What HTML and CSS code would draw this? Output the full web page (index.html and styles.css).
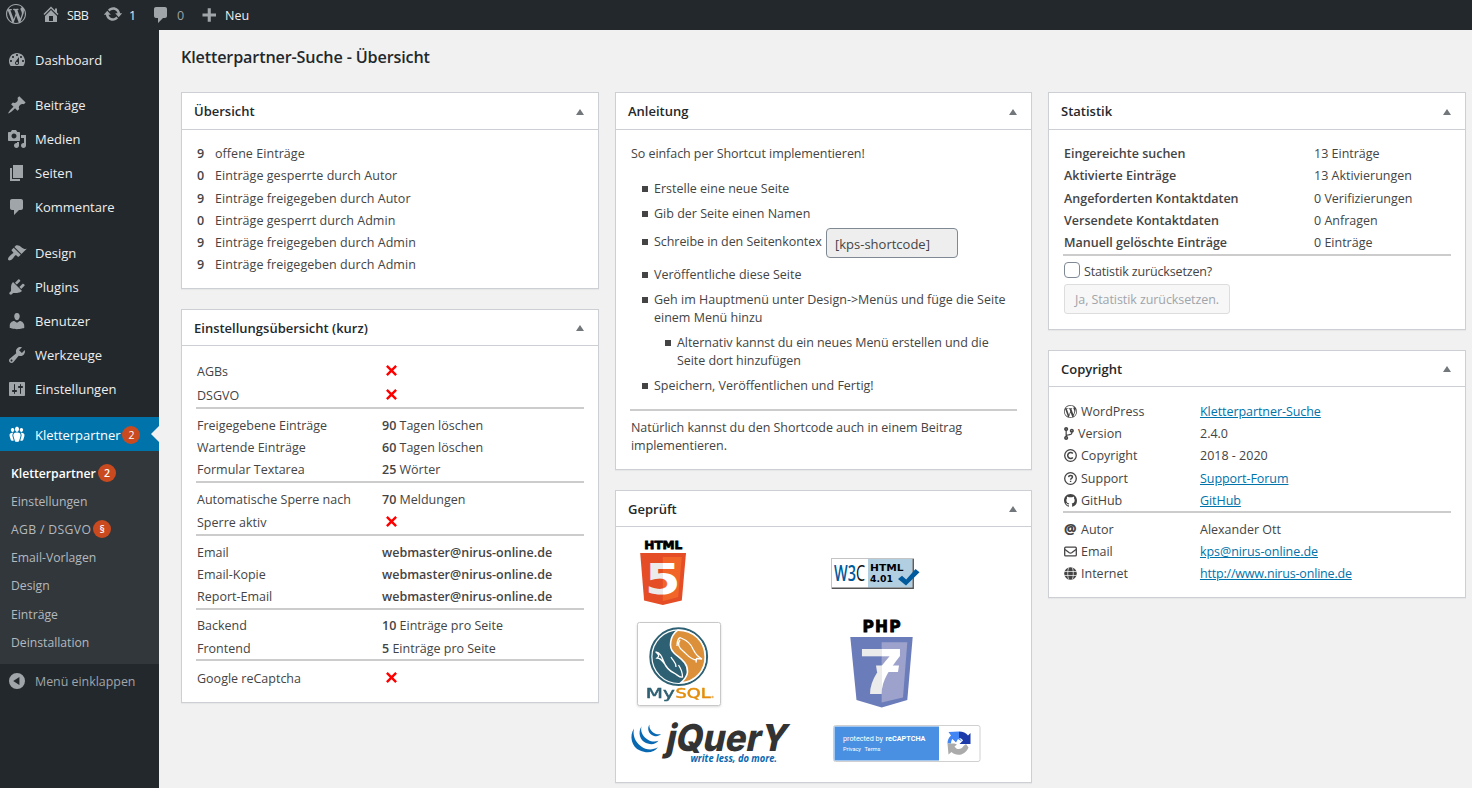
FILE: index.html
```html
<!DOCTYPE html>
<html lang="de">
<head>
<meta charset="utf-8">
<title>Kletterpartner-Suche - Übersicht</title>
<link rel="stylesheet" href="styles.css">
</head>
<body>
<svg class="sprite" aria-hidden="true">
  <symbol id="wordpress" viewBox="0 0 20 20"><path d="M20 10c0-5.51-4.49-10-10-10C4.48 0 0 4.49 0 10c0 5.52 4.48 10 10 10 5.51 0 10-4.48 10-10zM7.78 15.37L4.37 6.22c.55-.02 1.17-.08 1.17-.08.5-.06.44-1.13-.06-1.11 0 0-1.45.11-2.37.11-.18 0-.37 0-.58-.01C4.12 2.69 6.87 1.11 10 1.11c2.33 0 4.45.87 6.05 2.34-.68-.11-1.65.39-1.65 1.58 0 .74.45 1.36.9 2.1.35.61.55 1.36.55 2.46 0 1.49-1.4 5-1.4 5l-3.03-8.37c.54-.02.82-.17.82-.17.5-.05.44-1.25-.06-1.22 0 0-1.44.12-2.38.12-.87 0-2.33-.12-2.33-.12-.5-.03-.56 1.2-.06 1.22l.92.08 1.26 3.41zM17.41 10c.24-.64.74-1.87.43-4.25.7 1.29 1.05 2.71 1.05 4.25 0 3.29-1.73 6.24-4.4 7.78.97-2.59 1.94-5.2 2.92-7.78zM6.1 18.09C3.12 16.65 1.11 13.53 1.11 10c0-1.3.23-2.48.72-3.59C3.25 10.3 4.67 14.2 6.1 18.09zm4.03-6.63l2.58 6.98c-.86.29-1.76.45-2.71.45-.79 0-1.57-.11-2.29-.33.81-2.38 1.62-4.74 2.42-7.1z"/></symbol>
  <symbol id="comments" viewBox="0 0 20 20"><path d="M5 2h9c1.1 0 2 .9 2 2v7c0 1.1-.9 2-2 2h-2l-5 5v-5H5c-1.1 0-2-.9-2-2V4c0-1.1.9-2 2-2z"/></symbol>
  <symbol id="toggle" viewBox="0 0 8 6"><path d="M4 0l4 6H0z"/></symbol>
  <symbol id="cross" viewBox="0 0 10 10"><path d="M.8 .8l8.4 8.4M9.2 .8l-8.4 8.4" fill="none" stroke="#f00" stroke-width="2.2"/></symbol>
</svg>

<header class="adminbar">
  <svg class="ic wp"><use href="#wordpress"/></svg>
  <svg class="ic home" viewBox="0 0 20 20"><path d="M16 8.5l1.53 1.53-1.06 1.06L10 4.6l-6.47 6.49-1.06-1.06L10 2.5l4 4v-2h2v4zm-6-2.46l6 5.99V18H4v-5.97zM12 17v-5H8v5h4z"/></svg>
  <span class="bar-site">SBB</span>
  <svg class="ic upd" viewBox="0 0 20 20"><path d="M10.2 3.28c3.53 0 6.43 2.61 6.92 6h2.08l-3.5 4-3.5-4h2.32c-.45-1.97-2.21-3.45-4.32-3.45-1.45 0-2.73.71-3.54 1.78L4.95 5.66C6.23 4.2 8.11 3.28 10.2 3.28zm-.4 13.44c-3.52 0-6.43-2.61-6.92-6H.8l3.5-4c1.17 1.33 2.33 2.67 3.5 4H5.48c.45 1.97 2.21 3.45 4.32 3.45 1.45 0 2.73-.71 3.54-1.78l1.71 1.95c-1.28 1.46-3.15 2.38-5.25 2.38z"/></svg>
  <span class="bar-upd">1</span>
  <svg class="ic com"><use href="#comments"/></svg>
  <span class="bar-com">0</span>
  <svg class="ic plus" viewBox="0 0 20 20"><path d="M17 8.5v3h-5.2v5.2h-3.1v-5.2H3.5v-3h5.2V3.3h3.1v5.2z"/></svg>
  <span class="bar-new">Neu</span>
</header>

<div class="shell">
<nav class="menu">
  <a class="item gap-top"><svg class="ic" viewBox="0 0 20 20"><path d="M3.76 16h12.48c1.1-1.37 1.76-3.11 1.76-5 0-4.42-3.58-8-8-8s-8 3.58-8 8c0 1.89.66 3.63 1.76 5zM10 4c.55 0 1 .45 1 1s-.45 1-1 1-1-.45-1-1 .45-1 1-1zM6 6c.55 0 1 .45 1 1s-.45 1-1 1-1-.45-1-1 .45-1 1-1zm8 0c.55 0 1 .45 1 1s-.45 1-1 1-1-.45-1-1 .45-1 1-1zm-5.37 5.55L12 7v6c0 1.1-.9 2-2 2s-2-.9-2-2c0-.57.24-1.08.63-1.45zM4 10c.55 0 1 .45 1 1s-.45 1-1 1-1-.45-1-1 .45-1 1-1zm12 0c.55 0 1 .45 1 1s-.45 1-1 1-1-.45-1-1 .45-1 1-1zm-5 3c0-.55-.45-1-1-1s-1 .45-1 1 .45 1 1 1 1-.45 1-1z"/></svg><span>Dashboard</span></a>
  <a class="item sep"><svg class="ic" viewBox="0 0 20 20"><path d="M10.44 3.02l1.82-1.82 6.36 6.35-1.83 1.82c-1.05-.68-2.48-.57-3.41.36l-.75.75c-.92.93-1.04 2.35-.35 3.41l-1.83 1.82-2.41-2.41-2.8 2.79c-.42.42-3.38 2.71-3.8 2.29s1.86-3.39 2.28-3.81l2.79-2.79L4.1 9.36l1.83-1.82c1.05.69 2.48.57 3.4-.36l.75-.75c.93-.92 1.05-2.35.36-3.41z"/></svg><span>Beiträge</span></a>
  <a class="item"><svg class="ic" viewBox="0 0 20 20"><path d="M13 11V4c0-.55-.45-1-1-1h-1.67L9 1H5L3.67 3H2c-.55 0-1 .45-1 1v7c0 .55.45 1 1 1h10c.55 0 1-.45 1-1zM7 4.5c1.38 0 2.5 1.12 2.5 2.5S8.38 9.5 7 9.5 4.5 8.38 4.5 7 5.62 4.5 7 4.5zM14 6h5v10.5c0 1.38-1.12 2.5-2.5 2.5S14 17.88 14 16.5s1.12-2.5 2.5-2.5c.17 0 .34.02.5.05V9h-3V6zm-4 8.05V13h2v3.5c0 1.38-1.12 2.5-2.5 2.5S7 17.88 7 16.5 8.12 14 9.5 14c.17 0 .34.02.5.05z"/></svg><span>Medien</span></a>
  <a class="item"><svg class="ic" viewBox="0 0 20 20"><path d="M6 15V2h10v13H6zm-1 1h8v2H3V5h2v11z"/></svg><span>Seiten</span></a>
  <a class="item"><svg class="ic"><use href="#comments"/></svg><span>Kommentare</span></a>
  <a class="item sep2"><svg class="ic" viewBox="0 0 20 20"><path d="M14.48 11.06L7.41 3.99l1.5-1.5c.5-.56 2.3-.47 3.51.32 1.21.8 1.43 1.28 2.91 2.1 1.18.64 2.45 1.26 4.45.85zm-.71.71L6.7 4.7 4.93 6.47c-.39.39-.39 1.02 0 1.41l1.06 1.06c.39.39.39 1.03 0 1.42-.6.6-1.43 1.11-2.21 1.69-.35.26-.7.53-1.01.84C1.43 14.23.4 16.08 1.4 17.07c.99 1 2.84-.03 4.18-1.36.31-.31.58-.66.85-1.02.57-.78 1.08-1.61 1.69-2.21.39-.39 1.02-.39 1.41 0l1.06 1.06c.39.39 1.02.39 1.41 0z"/></svg><span>Design</span></a>
  <a class="item"><svg class="ic" viewBox="0 0 20 20"><path d="M13.11 4.36L9.87 7.6 8 5.73l3.24-3.24c.35-.34 1.05-.2 1.56.32.52.51.66 1.21.31 1.55zm-8 1.77l.91-1.12 9.01 9.01-1.19.84c-.71.71-2.63 1.16-3.82 1.16H6.14L4.9 17.26c-.59.59-1.54.59-2.12 0-.59-.58-.59-1.53 0-2.12l1.24-1.24v-3.88c0-1.13.4-3.19 1.09-3.89zm7.26 3.97l3.24-3.24c.34-.35 1.04-.21 1.55.31.52.51.66 1.21.31 1.55l-3.24 3.25z"/></svg><span>Plugins</span></a>
  <a class="item"><svg class="ic" viewBox="0 0 20 20"><path d="M10 9.25c-2.27 0-2.73-3.44-2.73-3.44C7 4.02 7.82 2 9.97 2c2.16 0 2.98 2.02 2.71 3.81 0 0-.41 3.44-2.68 3.44zm0 2.57L12.72 10c2.39 0 4.52 2.33 4.52 4.53v2.49s-3.65 1.13-7.24 1.13c-3.65 0-7.24-1.13-7.24-1.13v-2.49c0-2.25 1.94-4.48 4.47-4.48z"/></svg><span>Benutzer</span></a>
  <a class="item"><svg class="ic" viewBox="0 0 20 20"><path d="M16.68 9.77c-1.34 1.34-3.3 1.67-4.95.99l-5.41 6.52c-.99.99-2.59.99-3.58 0s-.99-2.59 0-3.57l6.52-5.42c-.68-1.65-.35-3.61.99-4.95 1.28-1.28 3.12-1.62 4.72-1.06l-2.89 2.89 2.82 2.82 2.86-2.87c.53 1.58.18 3.39-1.08 4.65zM3.81 16.21c.4.39 1.04.39 1.43 0 .4-.4.4-1.04 0-1.43-.39-.4-1.03-.4-1.43 0-.39.39-.39 1.03 0 1.43z"/></svg><span>Werkzeuge</span></a>
  <a class="item"><svg class="ic" viewBox="0 0 20 20"><path d="M18 16V4c0-.55-.45-1-1-1H3c-.55 0-1 .45-1 1v12c0 .55.45 1 1 1h14c.55 0 1-.45 1-1zM8 11h1c.55 0 1 .45 1 1s-.45 1-1 1H8v1.5c0 .28-.22.5-.5.5s-.5-.22-.5-.5V13H6c-.55 0-1-.45-1-1s.45-1 1-1h1V5.5c0-.28.22-.5.5-.5s.5.22.5.5V11zm5-2h-1c-.55 0-1-.45-1-1s.45-1 1-1h1V5.5c0-.28.22-.5.5-.5s.5.22.5.5V7h1c.55 0 1 .45 1 1s-.45 1-1 1h-1v5.5c0 .28-.22.5-.5.5s-.5-.22-.5-.5V9z"/></svg><span>Einstellungen</span></a>
  <a class="item active"><svg class="ic" viewBox="0 0 20 20"><path d="M8.03 4.46c-.29 1.28.55 3.46 1.97 3.46 1.41 0 2.25-2.18 1.96-3.46-.22-.98-1.08-1.63-1.96-1.63-.89 0-1.74.65-1.97 1.63zm-4.13.9c-.25 1.08.47 2.93 1.67 2.93s1.92-1.85 1.67-2.93c-.19-.83-.92-1.39-1.67-1.39s-1.48.56-1.67 1.39zm8.86 0c-.25 1.08.47 2.93 1.66 2.93 1.2 0 1.92-1.85 1.67-2.93-.19-.83-.92-1.39-1.67-1.39-.74 0-1.47.56-1.66 1.39zm-.59 11.43l1.25-4.3C14.2 10 12.71 8.47 10 8.47c-2.72 0-4.21 1.53-3.44 4.02l1.26 4.3C8.05 17.51 9 18 10 18c.98 0 1.94-.49 2.17-1.21zm-6.1-7.63c-.49.67-.96 1.83-.42 3.59l1.12 3.79c-.34.2-.77.31-1.2.31-.85 0-1.65-.41-1.85-1.03l-1.07-3.65c-.65-2.11.61-3.4 2.92-3.4.27 0 .54.02.79.06-.1.1-.2.22-.29.33zm8.35-.39c2.31 0 3.58 1.29 2.92 3.4l-1.07 3.65c-.2.62-1 1.03-1.85 1.03-.43 0-.86-.11-1.2-.31l1.11-3.77c.55-1.78.08-2.94-.42-3.61-.08-.11-.18-.23-.28-.33.25-.04.51-.06.79-.06z"/></svg><span>Kletterpartner</span><b class="badge">2</b></a>
  <div class="submenu">
    <a class="current"><span>Kletterpartner</span><b class="badge">2</b></a>
    <a>Einstellungen</a>
    <a><span class="agb">AGB / DSGVO</span><b class="badge">§</b></a>
    <a>Email-Vorlagen</a>
    <a>Design</a>
    <a>Einträge</a>
    <a>Deinstallation</a>
  </div>
  <a class="item collapse"><svg class="ic" viewBox="0 0 20 20"><path fill-rule="evenodd" d="M10 2a8 8 0 1 0 0 16 8 8 0 0 0 0-16zm2.4 3.9v8.2L6.2 10z"/></svg><span>Menü einklappen</span></a>
</nav>

<main class="content">
  <h1>Kletterpartner-Suche - Übersicht</h1>
  <div class="columns">
    <div class="column">
      <section class="panel overview">
        <h2><span>Übersicht</span><svg class="tog"><use href="#toggle"/></svg></h2>
        <div class="rows counts">
          <p><b>9</b><span>offene Einträge</span></p>
          <p><b>0</b><span>Einträge gesperrte durch Autor</span></p>
          <p><b>9</b><span>Einträge freigegeben durch Autor</span></p>
          <p><b>0</b><span>Einträge gesperrt durch Admin</span></p>
          <p><b>9</b><span>Einträge freigegeben durch Admin</span></p>
          <p><b>9</b><span>Einträge freigegeben durch Admin</span></p>
        </div>
      </section>
      <section class="panel settings">
        <h2><span>Einstellungsübersicht (kurz)</span><svg class="tog"><use href="#toggle"/></svg></h2>
        <div class="rows pairs">
          <div class="group first">
            <p class="tall"><span>AGBs</span><svg class="no"><use href="#cross"/></svg></p>
            <p class="tall"><span>DSGVO</span><svg class="no"><use href="#cross"/></svg></p>
          </div>
          <div class="group">
            <p><span>Freigegebene Einträge</span><span><b>90</b> Tagen löschen</span></p>
            <p><span>Wartende Einträge</span><span><b>60</b> Tagen löschen</span></p>
            <p><span>Formular Textarea</span><span><b>25</b> Wörter</span></p>
          </div>
          <div class="group">
            <p><span>Automatische Sperre nach</span><span><b>70</b> Meldungen</span></p>
            <p class="mid"><span>Sperre aktiv</span><svg class="no"><use href="#cross"/></svg></p>
          </div>
          <div class="group">
            <p><span>Email</span><b>webmaster@nirus-online.de</b></p>
            <p><span>Email-Kopie</span><b>webmaster@nirus-online.de</b></p>
            <p><span>Report-Email</span><b>webmaster@nirus-online.de</b></p>
          </div>
          <div class="group close">
            <p><span>Backend</span><span><b>10</b> Einträge pro Seite</span></p>
            <p class="low"><span>Frontend</span><span><b>5</b> Einträge pro Seite</span></p>
          </div>
          <div class="group last">
            <p class="tall"><span>Google reCaptcha</span><svg class="no"><use href="#cross"/></svg></p>
          </div>
        </div>
      </section>
    </div>

    <div class="column second">
      <section class="panel guide">
        <h2><span>Anleitung</span><svg class="tog"><use href="#toggle"/></svg></h2>
        <div class="guide-body">
          <p class="intro">So einfach per Shortcut implementieren!</p>
          <ul>
            <li>Erstelle eine neue Seite</li>
            <li>Gib der Seite einen Namen</li>
            <li class="code-line"><span>Schreibe in den Seitenkontex</span><span class="code">[kps-shortcode]</span></li>
            <li>Veröffentliche diese Seite</li>
            <li>Geh im Hauptmenü unter Design-&gt;Menüs und füge die Seite<br>einem Menü hinzu
              <ul><li>Alternativ kannst du ein neues Menü erstellen und die<br>Seite dort hinzufügen</li></ul>
            </li>
            <li>Speichern, Veröffentlichen und Fertig!</li>
          </ul>
          <p class="note">Natürlich kannst du den Shortcode auch in einem Beitrag<br>implementieren.</p>
        </div>
      </section>
      <section class="panel tested">
        <h2><span>Geprüft</span><svg class="tog"><use href="#toggle"/></svg></h2>
        <div class="logos">
          <svg class="html5" width="47" height="66" viewBox="0 0 47 66">
            <defs><linearGradient id="five" gradientUnits="userSpaceOnUse" x1="0" x2="46" y1="0" y2="0"><stop offset=".495" stop-color="#ebebeb"/><stop offset=".495" stop-color="#fff"/></linearGradient></defs>
            <text x="4.3" y="9.2" font-family="DejaVu Sans" font-weight="700" font-size="11.2" stroke="#000" stroke-width=".8" textLength="38" lengthAdjust="spacingAndGlyphs">HTML</text>
            <path fill="#e44d26" d="M.2 13H46l-4.2 47.4L22.8 65 4.1 60.4z"/>
            <path fill="#f16529" d="M22.8 16.9h19l-3.6 40.2-15.4 4.2z"/>
            <text x="5" y="53.8" font-family="DejaVu Sans" font-weight="700" font-size="42.5" fill="url(#five)" textLength="35.5" lengthAdjust="spacingAndGlyphs">5</text>
          </svg>
          <svg class="w3c" width="89" height="32" viewBox="0 0 89 32">
            <rect x=".5" y=".5" width="82" height="30" fill="#fff" stroke="#c4c4c4"/>
            <path fill="#b2cee1" d="M37 1h44.5v28.5H37z"/>
            <path d="M82.2 1v29.2H1" fill="none" stroke="#555" stroke-width="1.4"/>
            <text x="3" y="22.5" font-family="Open Sans" font-weight="600" font-size="21" fill="#005a9c" textLength="31" lengthAdjust="spacingAndGlyphs">W3<tspan fill="#111" font-weight="400">C</tspan></text>
            <text x="39" y="12.6" font-family="DejaVu Sans" font-weight="700" font-size="9" textLength="33.5" lengthAdjust="spacingAndGlyphs">HTML</text>
            <text x="39" y="24.2" font-family="DejaVu Sans" font-weight="700" font-size="9" textLength="23" lengthAdjust="spacingAndGlyphs">4.01</text>
            <path fill="#005a9c" d="M67 21l4-3.2 4.2 3.6L84.5 11l4 3.2L75 27.6z"/>
          </svg>
          <svg class="mysql" width="84" height="84" viewBox="0 0 84 84">
            <rect x=".5" y=".5" width="83" height="83" rx="2" fill="#fff" stroke="#c8c8c8"/>
            <circle cx="41.7" cy="34.7" r="28.4" fill="#fff" stroke="#2d6073" stroke-width="2"/>
            <circle cx="41.7" cy="34.7" r="26.2" fill="#2d6073"/>
            <path fill="#db9039" stroke="#fff" stroke-width="1.6" d="M40.7 8.2C33 14 31 25 37 31c5 5 14 9 13.5 19-.3 4-3 7.5-6.5 10.7C58 60 68.2 49 68.2 35 68.2 19 56 8 40.7 8.2z"/>
            <path fill="none" stroke="#fff" stroke-width="1.3" d="M40 24c0-6 2-9 4-8 5 2 10 6 12 11 2 4 3 7 9 10l-5-.5c-1-.3-.5 2-1 4M43 18c-3 4-1 8 3 11s7 9 14 9M18.5 30c5 1 6 4 8 9 2 6 7 11 12 13 3 2 5 4 7 3 0-4-2-9-4-12M19 30c4 4 3 4 1 6 7 0 7 9 14 13 4 3 6 3 9 6M34 35c2 4 5 5 5 10"/>
            <text x="8.7" y="76" font-family="DejaVu Sans" font-size="13.5" fill="#2d6073" stroke="#2d6073" stroke-width=".5" textLength="29" lengthAdjust="spacingAndGlyphs">My</text>
            <text x="38.5" y="76" font-family="DejaVu Sans" font-size="13.5" fill="#e48e0b" stroke="#e48e0b" stroke-width=".5" textLength="35" lengthAdjust="spacingAndGlyphs">SQL</text>
            <circle cx="75.5" cy="75" r="1.2" fill="#edb565"/>
          </svg>
          <svg class="php" width="64" height="90" viewBox="0 0 64 90">
            <defs><linearGradient id="seven" gradientUnits="userSpaceOnUse" x1="0" x2="62" y1="0" y2="0"><stop offset=".51" stop-color="#ebebeb"/><stop offset=".51" stop-color="#fff"/></linearGradient></defs>
            <text x="12.5" y="12.7" font-family="DejaVu Sans" font-weight="700" font-size="15.5" stroke="#000" stroke-width=".8" textLength="38" lengthAdjust="spacing">PHP</text>
            <path fill="#6b7cba" d="M.3 18h62.4l-5.4 63-25.6 7.5L6.5 81z"/>
            <path fill="#9ca2cb" d="M31.6 23.3h25.7L53 78.5l-21.4 5z"/>
            <text x="8.5" y="74.5" font-family="Liberation Sans" font-weight="700" font-size="64" fill="url(#seven)" textLength="45" lengthAdjust="spacingAndGlyphs">7</text>
            <path fill="url(#seven)" d="M26 46.5h23l-1 6.5H27z"/>
          </svg>
          <svg class="jquery" width="162" height="43" viewBox="0 0 162 43">
            <g fill="#0868b1" transform="scale(1 1.08)">
              <path d="M3 5C-2 12 .5 22 9 25.5c7 3 14 2 18-3-6 3-12 2.5-17-1C4 17.5 1.5 11 3 5z"/>
              <path d="M10.5 3C6.5 9 9 16 15 18.5c4.5 1.8 9.5 1.5 12.5-2-4.5 1.5-8.5.5-12-2C11 11.5 9.3 7 10.5 3z"/>
              <path d="M18.5 1.5c-3 4-.5 9 4 10.3 3 1 5.5.5 7.5-1.5-3.5.5-6 0-8.5-2S18 4.5 18.5 1.5z"/>
            </g>
            <text transform="translate(33.5 28.3) skewX(-12)" font-family="Inter" font-weight="800" font-size="37" fill="#333" textLength="121" lengthAdjust="spacingAndGlyphs">jQuer<tspan class="tall-y">y</tspan></text>
            <text x="59.5" y="39" font-family="Open Sans" font-weight="700" font-style="italic" font-size="10.5" fill="#0868b1" textLength="86.5" lengthAdjust="spacingAndGlyphs">write less, do more.</text>
          </svg>
          <svg class="recaptcha" width="148" height="38" viewBox="0 0 148 38">
            <rect x=".5" y=".5" width="146.5" height="36" rx="2" fill="#fff" stroke="#d0d0d0"/>
            <path fill="#4a90e2" d="M1.5 1.5H106v34H1.5z"/>
            <text x="10" y="15.8" font-family="Roboto" font-size="7.3" fill="#fff" textLength="40" lengthAdjust="spacingAndGlyphs">protected by</text>
            <text x="52.5" y="15.8" font-family="Roboto" font-weight="700" font-size="7.3" fill="#fff" textLength="40" lengthAdjust="spacingAndGlyphs">reCAPTCHA</text>
            <text x="10" y="26.3" font-family="Roboto" font-size="5.8" fill="#fff" textLength="18" lengthAdjust="spacingAndGlyphs">Privacy</text>
            <text x="31.5" y="26.3" font-family="Roboto" font-size="5.8" fill="#fff" textLength="16" lengthAdjust="spacingAndGlyphs">Terms</text>
            <path fill="#1c3aa9" d="M126 6.5c4 0 7 1.5 9 4l2.5-2.5v11h-11l3.5-3.5c-1-1.5-2-2.5-4-2.5z"/>
            <path fill="#4285f4" d="M126 6.5v6l3 4-4-2.5-2 3.5-3.5-3.5c-1 1-1.5 2.5-1.5 4.5h-3.5c0-3 1-6 3.5-8L115.5 7z"/>
            <path fill="#ababab" d="M114.5 18.5h7l2.5 1-2.5 2c2 3.5 7 3.5 9-.5l2.5-2 2.5 3.5c-3.5 8.5-12.5 9-17 4.5l-3 2.5z"/>
          </svg>
        </div>
      </section>
    </div>

    <div class="column">
      <section class="panel stats">
        <h2><span>Statistik</span><svg class="tog"><use href="#toggle"/></svg></h2>
        <div class="rows stat-rows">
          <div class="group">
            <p><b>Eingereichte suchen</b><span>13 Einträge</span></p>
            <p><b>Aktivierte Einträge</b><span>13 Aktivierungen</span></p>
            <p><b>Angeforderten Kontaktdaten</b><span>0 Verifizierungen</span></p>
            <p><b>Versendete Kontaktdaten</b><span>0 Anfragen</span></p>
            <p><b>Manuell gelöschte Einträge</b><span>0 Einträge</span></p>
          </div>
          <label class="reset"><i class="box"></i><span>Statistik zurücksetzen?</span></label>
          <span class="btn">Ja, Statistik zurücksetzen.</span>
        </div>
      </section>
      <section class="panel copy">
        <h2><span>Copyright</span><svg class="tog"><use href="#toggle"/></svg></h2>
        <div class="rows copy-rows">
          <div class="group">
            <p><span class="lab"><svg class="fa"><use href="#wordpress"/></svg>WordPress</span><a href="#">Kletterpartner-Suche</a></p>
            <p><span class="lab"><svg class="fa narrow" viewBox="0 0 384 512"><path d="M384 144c0-44.2-35.8-80-80-80s-80 35.8-80 80c0 36.4 24.3 67.1 57.5 76.8-.6 16.1-4.2 28.5-11 36.9-15.4 19.2-49.3 22.4-85.2 25.7-28.2 2.6-57.4 5.4-81.3 16.9v-144c32.5-10.2 56-40.5 56-76.3 0-44.2-35.8-80-80-80S0 35.8 0 80c0 35.8 23.5 66.1 56 76.3v199.3C23.5 365.9 0 396.2 0 432c0 44.2 35.8 80 80 80s80-35.8 80-80c0-34-21.2-63.1-51.2-74.6 3.1-5.2 7.8-9.8 14.9-13.4 16.2-8.2 40.4-10.4 66.1-12.8 42.2-3.9 90-8.4 118.2-43.4 14-17.4 21.1-39.8 21.6-67.9 31.6-10.8 54.4-40.7 54.4-75.9zM80 64c8.8 0 16 7.2 16 16s-7.2 16-16 16-16-7.2-16-16 7.2-16 16-16zm0 384c-8.8 0-16-7.2-16-16s7.2-16 16-16 16 7.2 16 16-7.2 16-16 16zm224-320c8.8 0 16 7.2 16 16s-7.2 16-16 16-16-7.2-16-16 7.2-16 16-16z"/></svg>Version</span><span>2.4.0</span></p>
            <p><span class="lab"><svg class="fa line" viewBox="0 0 13 13"><circle cx="6.5" cy="6.5" r="5.8"/><path d="M8.8 8.4a2.9 2.9 0 1 1 0-3.8" stroke-width="1.5"/></svg>Copyright</span><span>2018 - 2020</span></p>
            <p><span class="lab"><svg class="fa line" viewBox="0 0 13 13"><circle cx="6.5" cy="6.5" r="5.8"/><path d="M4.6 5.1C4.7 3 8.5 3 8.5 5.1c0 1.3-1.9 1.3-1.9 2.6M6.6 8.7v1.4" stroke-width="1.4"/></svg>Support</span><a href="#">Support-Forum</a></p>
            <p><span class="lab"><svg class="fa" viewBox="0 0 16 16"><path d="M8 0C3.58 0 0 3.58 0 8c0 3.54 2.29 6.53 5.47 7.59.4.07.55-.17.55-.38 0-.19-.01-.82-.01-1.49-2.01.37-2.53-.49-2.69-.94-.09-.23-.48-.94-.82-1.13-.28-.15-.68-.52-.01-.53.63-.01 1.08.58 1.23.82.72 1.21 1.87.87 2.33.66.07-.52.28-.87.51-1.07-1.78-.2-3.64-.89-3.64-3.95 0-.87.31-1.59.82-2.15-.08-.2-.36-1.02.08-2.12 0 0 .67-.21 2.2.82.64-.18 1.32-.27 2-.27s1.36.09 2 .27c1.53-1.04 2.2-.82 2.2-.82.44 1.1.16 1.92.08 2.12.51.56.82 1.27.82 2.15 0 3.07-1.87 3.75-3.65 3.95.29.25.54.73.54 1.48 0 1.07-.01 1.93-.01 2.2 0 .21.15.46.55.38A8.01 8.01 0 0 0 16 8c0-4.42-3.58-8-8-8z"/></svg>GitHub</span><a href="#">GitHub</a></p>
          </div>
          <div class="group authors">
            <p><span class="lab"><i class="fa at">@</i>Autor</span><span>Alexander Ott</span></p>
            <p><span class="lab"><svg class="fa line" viewBox="0 0 13 13"><rect x=".7" y="2.2" width="11.6" height="8.7" rx="1"/><path d="M1 4.6l4.3 3.2c.8.5 1.6.5 2.4 0L12 4.6"/></svg>Email</span><a href="#">kps@nirus-online.de</a></p>
            <p><span class="lab"><svg class="fa" viewBox="0 0 13 13"><circle cx="6.5" cy="6.5" r="6.3"/><path d="M.2 4.5h12.6M.2 8.5h12.6M4.6.5c-1.2 3.500-1.200 8.500 0 12M8.400.5c1.200 3.500 1.200 8.500 0 12" fill="none" stroke="#fff" stroke-width=".7"/></svg>Internet</span><a class="url" href="#">http://www.nirus-online.de</a></p>
          </div>
        </div>
      </section>
    </div>
  </div>
</main>
</div>
</body>
</html>
```

FILE: styles.css
```css
* { box-sizing: border-box; }
body {
  margin: 0;
  width: 1472px;
  height: 788px;
  overflow: hidden;
  background: #f1f1f1;
  color: #444;
  font-family: "Open Sans", "Noto Sans", sans-serif;
  font-size: 12.5px;
}
h1, h2, p, ul { margin: 0; padding: 0; }
b { font-weight: 600; }
a { color: inherit; }
svg { display: block; flex: none; }
.sprite { position: absolute; width: 0; height: 0; }
.ic { width: 20px; height: 20px; fill: #a0a5aa; }

/* Top bar */
.adminbar {
  display: flex;
  align-items: center;
  height: 30px;
  padding-left: 6px;
  background: #23282d;
  color: #eee;
  font-size: 12.5px;
}
.adminbar .wp { margin-top: -2px; }
.adminbar .home { margin: -2px 0 0 15px; }
.bar-site { width: 37px; padding-left: 6px; letter-spacing: -.6px; }
.adminbar .upd { margin: -2px 0 0 5px; }
.bar-upd { width: 27px; padding-left: 6px; }
.adminbar .com { margin-left: 1px; width: 20px; }
.bar-com { width: 32px; padding-left: 6px; color: #9da2a7; }
.adminbar .plus { margin: -1px 0 0 -4px; }
.bar-new { padding-left: 6px; }

.shell { display: flex; height: 758px; }

/* Side menu */
.menu { width: 159px; flex: none; background: #23282d; color: #eee; font-size: 13px; }
.item { display: flex; align-items: center; height: 34px; padding-left: 7px; }
.item .ic { margin-right: 8px; margin-top: -1px; }
.gap-top { margin-top: 13px; }
.sep { margin-top: 11px; }
.sep2 { margin-top: 12px; }
.active { position: relative; margin-top: 11px; padding-top: 1px; background: #0073aa; color: #fff; letter-spacing: -.05px; }
.active .ic { fill: #fff; margin-top: -2px; }
.active::after {
  content: "";
  position: absolute;
  right: 0;
  top: 9px;
  border: 8px solid transparent;
  border-left: 0;
  border-right-color: #f1f1f1;
}
.badge {
  width: 18px;
  height: 18px;
  margin-left: 2px;
  border-radius: 9px;
  background: #ca4a1f;
  color: #fff;
  font-size: 10.5px;
  font-weight: 400;
  line-height: 18px;
  text-align: center;
}
.submenu .badge { font-weight: 600; }
.submenu { height: 213px; padding: 8px 0 0 11px; background: #32373c; color: #b4b9be; font-size: 12.2px; }
.submenu a { display: flex; align-items: center; height: 28.2px; }
.submenu .current { color: #fff; font-weight: 600; }
.agb { letter-spacing: .35px; }
.collapse { color: #a0a5aa; font-size: 12.4px; }

/* Content */
.content { flex: 1; padding-left: 22px; }
h1 { height: 62px; padding-top: 15px; color: #23282d; font-size: 16.2px; font-weight: 600; line-height: 24px; letter-spacing: -.16px; }
.columns { display: flex; gap: 16px; }
.column { width: 418px; display: flex; flex-direction: column; gap: 20px; }
.second { width: 417px; }
.panel { background: #fff; border: 1px solid #ccd0d4; box-shadow: 0 1px 1px rgba(0, 0, 0, .04); }
h2 {
  display: flex;
  align-items: center;
  justify-content: space-between;
  height: 37px;
  padding: 0 14px 0 12px;
  border-bottom: 1px solid #ccd0d4;
  color: #23282d;
  font-size: 13px;
  font-weight: 600;
}
.panel + .panel h2 { height: 36px; padding-top: 1px; }
.tog { width: 8px; height: 6px; fill: #72777c; margin-top: 2px; }
.panel + .panel .tog { margin-top: 0; }
.overview { height: 197px; }
.settings { height: 394px; }
.guide { height: 378px; }
.tested { height: 293px; }
.stats { height: 238px; }
.copy { height: 248px; }

.rows { padding: 12.4px 14px 0; }
.rows p { display: grid; align-items: center; height: 22.2px; padding-left: 1px; white-space: nowrap; }
.counts { padding-top: 12.6px; }
.counts p { grid-template-columns: 18px 1fr; }
.counts span { letter-spacing: .05px; }
.group { padding-top: 5.4px; border-bottom: 2px solid #ccc; }
.pairs p { grid-template-columns: 185px 1fr; }
.pairs .first { padding-top: .6px; }
.pairs .tall { height: 24px; }
.pairs .tall span { padding-top: 1px; }
.pairs .mid { height: 23.4px; }
.pairs .low { padding-top: 1px; }
.pairs .close { padding-top: 4.6px; }
.pairs .last { border: 0; }
.no { width: 11px; height: 11px; margin: -1px 0 0 4px; }
.mid .no, .last .no { margin-top: -2px; }

/* Guide */
.guide-body { padding: 15px 14px 0; line-height: 18px; white-space: nowrap; }
.intro { padding-left: 1px; letter-spacing: -.06px; }
.guide-body ul { list-style: none; padding-left: 24px; margin-top: 17px; }
.guide-body li { position: relative; margin-bottom: 7px; }
.guide-body li::before { content: ""; position: absolute; left: -12px; top: 6px; width: 6px; height: 6px; background: #444; }
.guide-body li ul { margin-top: 7px; padding-left: 23px; letter-spacing: -.06px; }
.guide-body .code-line { display: flex; height: 36px; margin-bottom: 0; align-items: center; margin-top: -5px; }
.guide-body .code-line::before { top: 14px; }
.code-line span:first-child { width: 172px; padding-bottom: 3px; letter-spacing: -.06px; }
.code { width: 132px; height: 30px; padding: 0 8px; border: 1px solid #7e8993; border-radius: 4px; background: #eee; font-size: 13px; line-height: 30px; }
.code-line + li { margin-top: 5px; }
.note { margin-top: 14px; padding: 8px 0 0 1px; border-top: 2px solid #ccc; letter-spacing: -.04px; }

/* Logos */
.logos { display: grid; grid-template-columns: 200px 1fr; grid-template-rows: 65px 89px 41px; row-gap: 14px; padding: 13px 0 0 15px; }
.logos svg { overflow: visible; }
.html5 { margin-left: 9px; }
.w3c { margin-top: 18px; }
.mysql { margin: 3px 0 0 6px; filter: drop-shadow(0 1px 1px rgba(0, 0, 0, .15)); }
.php { margin-left: 19px; }
.jquery { margin-top: 1px; }
.tall-y { text-transform: uppercase; }
.recaptcha { margin: 3px 0 0 2px; }

/* Statistics */
.stat-rows { padding-top: 12.6px; }
.stat-rows p { grid-template-columns: 250px 1fr; }
.stat-rows .group { padding: 0 0 .8px; }
.reset { display: flex; align-items: center; height: 26px; padding: 4px 0 0 1px; letter-spacing: -.15px; }
.box { width: 16px; height: 16px; margin: -2px 4px 0 0; border: 1px solid #7e8993; border-radius: 4px; }
.btn { display: block; width: 166px; height: 30px; margin: 2px 0 0 1px; padding: 0 10px; border: 1px solid #ddd; border-radius: 3px; background: #f7f7f7; color: #a0a5aa; line-height: 30px; white-space: nowrap; letter-spacing: -.08px; }

/* Copyright */
.copy-rows { padding-top: 13.4px; }
.copy-rows p { grid-template-columns: 136px 1fr; }
.copy-rows .group { padding-top: 0; }
.copy-rows .authors { padding-top: 5px; border: 0; }
.lab { display: flex; align-items: center; }
.fa { width: 13px; height: 13px; margin-right: 4px; fill: #444; }
.narrow { width: 10px; }
.line { fill: none; stroke: #444; stroke-width: 1.3; }
.at { font: 800 14px/12px "Open Sans", sans-serif; color: #444; }
.copy-rows a { color: #0073aa; text-decoration: underline; letter-spacing: -.06px; }
.copy-rows .url { letter-spacing: -.19px; }
```
